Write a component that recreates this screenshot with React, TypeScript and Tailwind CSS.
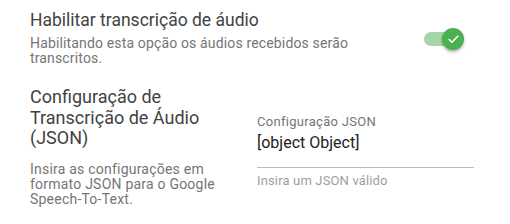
import { Check } from 'lucide-react';

export default function App() {
  return (
    <div className="w-[510px] h-[224px] bg-white px-[30px] pt-2 font-['Roboto',sans-serif]">
      {/* Enable transcription */}
      <div className="flex items-start justify-between pr-[20px]">
        <div className="w-[330px]">
          <h2 className="text-[17.5px] leading-6 text-[#424242]">Habilitar transcrição de áudio</h2>
          <p className="mt-1 text-[14px] leading-[15px] tracking-[0.15px] text-[#757575]">
            Habilitando esta opção os áudios recebidos serão transcritos.
          </p>
        </div>
        <div className="relative mt-[24px] h-[14px] w-[36px] rounded-full bg-[#a5d6a7]">
          <div className="absolute -top-[4px] right-[-4px] flex h-[22px] w-[22px] items-center justify-center rounded-full bg-[#4caf50] shadow-[0_2px_3px_rgba(0,0,0,0.3)]">
            <Check className="h-[13px] w-[13px] text-white" strokeWidth={3} />
          </div>
        </div>
      </div>

      {/* JSON config */}
      <div className="mt-[21px] grid grid-cols-[217px_217px] gap-[10px]">
        <div>
          <h2 className="text-[18px] leading-[20.5px] text-[#424242]">
            Configuração de Transcrição de Áudio (JSON)
          </h2>
          <p className="mt-[13px] text-[14px] leading-[15px] tracking-[0.22px] text-[#757575]">
            Insira as configurações em formato JSON para o Google Speech-To-Text.
          </p>
        </div>
        <div className="pt-[27px]">
          <label className="block text-[13px] leading-4 tracking-[0.3px] text-[#757575]">Configuração JSON</label>
          <div className="mt-[3px] border-b border-[#bdbdbd] pb-[14px] text-[16px] leading-5 text-[#212121]">
            [object Object]
          </div>
          <p className="mt-[5px] text-[13px] leading-4 tracking-[0.15px] text-[#9e9e9e]">Insira um JSON válido</p>
        </div>
      </div>
    </div>
  );
}
